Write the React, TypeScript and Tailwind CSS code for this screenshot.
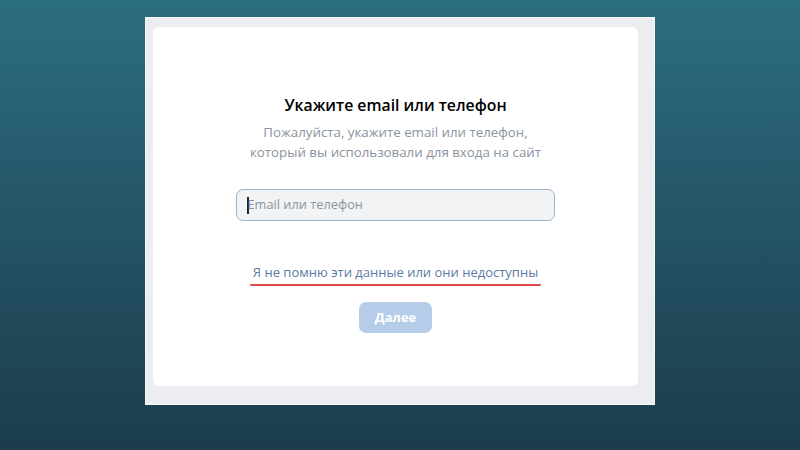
export default function App() {
  return (
    <div
      className="w-[800px] h-[450px] bg-gradient-to-b from-[#2b6e80] to-[#1c3c4c] flex justify-center pt-[17px]"
      style={{ fontFamily: '"Open Sans", "Noto Sans", sans-serif' }}
    >
      <div className="w-[510px] h-[388px] bg-[#ebedf0] border border-[#f4f6f8] pt-[9px] pl-[7px] pr-[16px] pb-[18px]">
        <div className="w-[485px] h-[359px] bg-white rounded-[6px] flex flex-col items-center pt-[66px]">
          <h1 className="text-[15.8px] leading-[24px] font-semibold text-black">
            Укажите email или телефон
          </h1>
          <p className="mt-[6px] text-[13.3px] leading-[19.5px] text-[#8a949f] text-center">
            Пожалуйста, укажите email или телефон,
            <br />
            который вы использовали для входа на сайт
          </p>
          <div className="mt-[27px] w-[319px] h-[32px] rounded-[7px] border border-[#9cb3cc] bg-[#f2f3f5] flex items-center pl-[10px]">
            <span className="w-[1.5px] h-[17px] bg-[#222]" />
            <span className="text-[12.8px] text-[#8a949f] -ml-[1px]">Email или телефон</span>
          </div>
          <div className="mt-[41px] flex flex-col items-center">
            <span className="text-[13px] leading-[20px] text-[#5b7aa3] px-[4px]">
              Я не помню эти данные или они недоступны
            </span>
            <span className="mt-[2px] w-[291px] h-[2px] bg-[#e2474b] rounded-full" />
          </div>
          <button className="mt-[16px] w-[73px] h-[31px] rounded-[7px] bg-[#b5cde8] text-white text-[13px] font-bold">
            Далее
          </button>
        </div>
      </div>
    </div>
  );
}
